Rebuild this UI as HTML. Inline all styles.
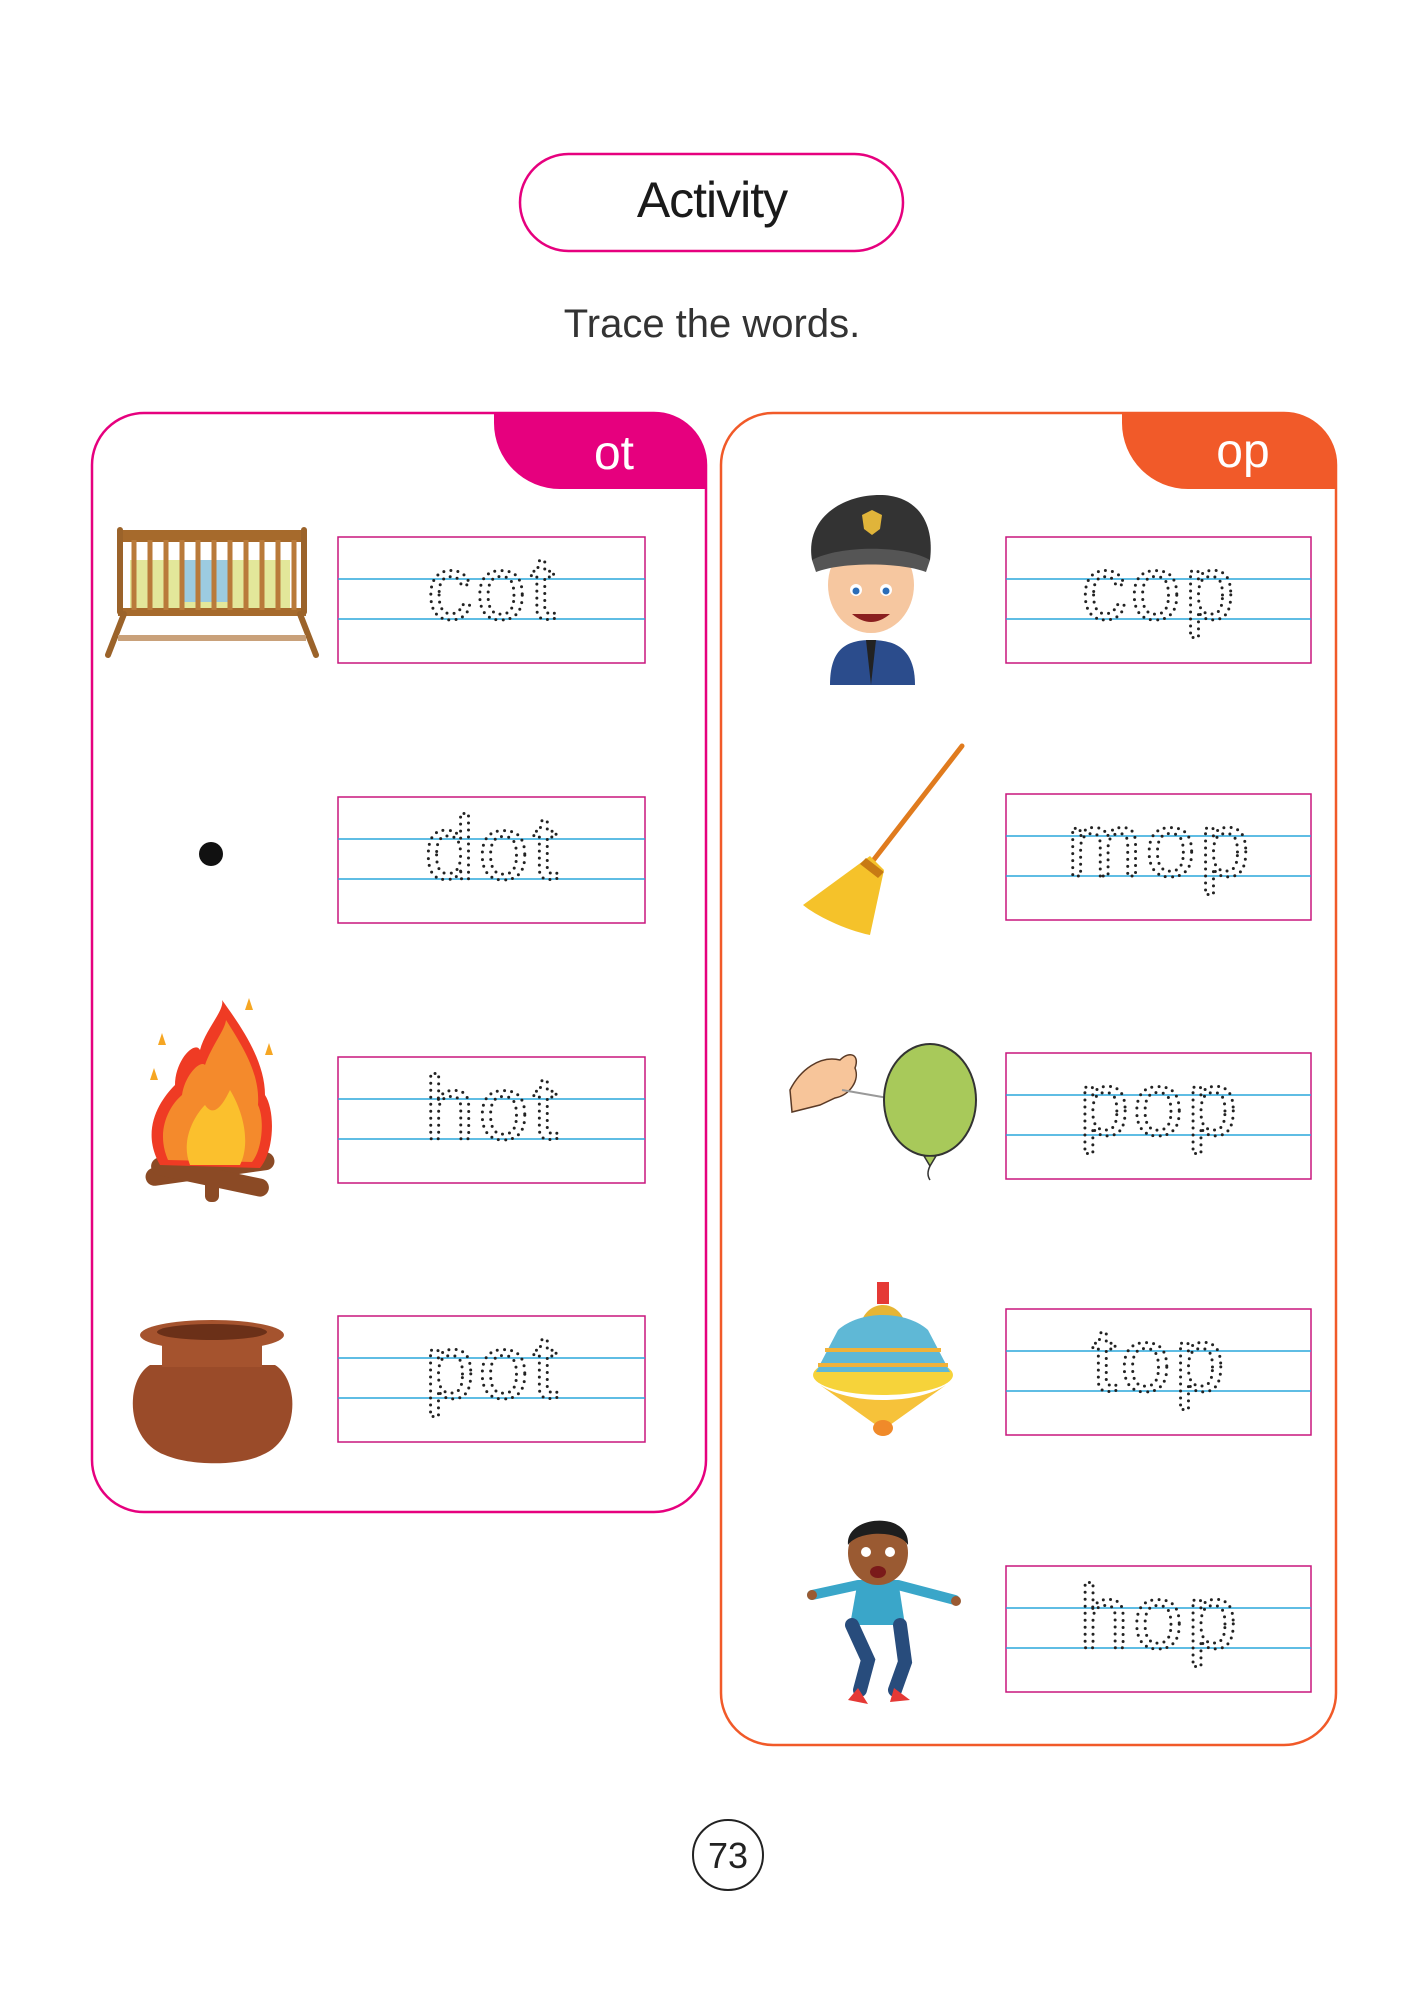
<!DOCTYPE html>
<html><head><meta charset="utf-8"><style>
html,body{margin:0;padding:0;background:#fff;}
svg{display:block;}
.t{font-family:"Liberation Sans",sans-serif;}
.tr{font-family:"Liberation Sans",sans-serif;font-size:90px;letter-spacing:4px;fill:none;stroke:#222;stroke-width:3;stroke-dasharray:0 7;stroke-linecap:round;}
</style></head><body>
<svg width="1414" height="2000" viewBox="0 0 1414 2000" xmlns="http://www.w3.org/2000/svg">
<!-- header -->
<rect x="520" y="154" width="383" height="97" rx="48.5" fill="#fff" stroke="#e6007e" stroke-width="2.5"/>
<text x="712" y="217" text-anchor="middle" class="t" font-size="50" fill="#1a1a1a" letter-spacing="-1">Activity</text>
<text x="712" y="337" text-anchor="middle" class="t" font-size="40" fill="#333">Trace the words.</text>

<!-- left panel -->
<path d="M494 413 H656 A50 50 0 0 1 706 463 V489 H560 A66 66 0 0 1 494 423 Z" fill="#e6007e"/>
<rect x="92" y="413" width="614" height="1099" rx="52" fill="none" stroke="#e6007e" stroke-width="2.5"/>
<text x="614" y="469" text-anchor="middle" class="t" font-size="48" fill="#fff">ot</text>

<!-- right panel -->
<path d="M1122 413 H1286 A50 50 0 0 1 1336 463 V489 H1188 A66 66 0 0 1 1122 423 Z" fill="#f15a29"/>
<rect x="721" y="413" width="615" height="1332" rx="52" fill="none" stroke="#f15a29" stroke-width="2.5"/>
<text x="1243" y="467" text-anchor="middle" class="t" font-size="48" fill="#fff">op</text>

<g stroke-width="1.5" fill="none">
<g transform="translate(338,537)"><rect width="307" height="126" stroke="#c8177d"/><line x1="0" y1="42" x2="307" y2="42" stroke="#2aa7dc"/><line x1="0" y1="82" x2="307" y2="82" stroke="#2aa7dc"/></g>
<g transform="translate(338,797)"><rect width="307" height="126" stroke="#c8177d"/><line x1="0" y1="42" x2="307" y2="42" stroke="#2aa7dc"/><line x1="0" y1="82" x2="307" y2="82" stroke="#2aa7dc"/></g>
<g transform="translate(338,1057)"><rect width="307" height="126" stroke="#c8177d"/><line x1="0" y1="42" x2="307" y2="42" stroke="#2aa7dc"/><line x1="0" y1="82" x2="307" y2="82" stroke="#2aa7dc"/></g>
<g transform="translate(338,1316)"><rect width="307" height="126" stroke="#c8177d"/><line x1="0" y1="42" x2="307" y2="42" stroke="#2aa7dc"/><line x1="0" y1="82" x2="307" y2="82" stroke="#2aa7dc"/></g>
<g transform="translate(1006,537)"><rect width="305" height="126" stroke="#c8177d"/><line x1="0" y1="42" x2="305" y2="42" stroke="#2aa7dc"/><line x1="0" y1="82" x2="305" y2="82" stroke="#2aa7dc"/></g>
<g transform="translate(1006,794)"><rect width="305" height="126" stroke="#c8177d"/><line x1="0" y1="42" x2="305" y2="42" stroke="#2aa7dc"/><line x1="0" y1="82" x2="305" y2="82" stroke="#2aa7dc"/></g>
<g transform="translate(1006,1053)"><rect width="305" height="126" stroke="#c8177d"/><line x1="0" y1="42" x2="305" y2="42" stroke="#2aa7dc"/><line x1="0" y1="82" x2="305" y2="82" stroke="#2aa7dc"/></g>
<g transform="translate(1006,1309)"><rect width="305" height="126" stroke="#c8177d"/><line x1="0" y1="42" x2="305" y2="42" stroke="#2aa7dc"/><line x1="0" y1="82" x2="305" y2="82" stroke="#2aa7dc"/></g>
<g transform="translate(1006,1566)"><rect width="305" height="126" stroke="#c8177d"/><line x1="0" y1="42" x2="305" y2="42" stroke="#2aa7dc"/><line x1="0" y1="82" x2="305" y2="82" stroke="#2aa7dc"/></g>
</g>

<text class="tr" x="493" y="619" text-anchor="middle">cot</text>
<text class="tr" x="493" y="879" text-anchor="middle">dot</text>
<text class="tr" x="493" y="1139" text-anchor="middle">hot</text>
<text class="tr" x="493" y="1398" text-anchor="middle">pot</text>
<text class="tr" x="1160" y="619" text-anchor="middle">cop</text>
<text class="tr" x="1160" y="876" text-anchor="middle">mop</text>
<text class="tr" x="1160" y="1135" text-anchor="middle">pop</text>
<text class="tr" x="1160" y="1391" text-anchor="middle">top</text>
<text class="tr" x="1160" y="1648" text-anchor="middle">hop</text>

<!-- crib -->
<g>
<rect x="130" y="560" width="160" height="50" fill="#e3e79a"/>
<rect x="182" y="560" width="50" height="42" fill="#9ccbe0"/>
<rect x="118" y="530" width="188" height="12" rx="4" fill="#a66a2c"/>
<rect x="118" y="608" width="188" height="8" fill="#a66a2c"/>
<g stroke="#b97a3a" stroke-width="5">
<line x1="134" y1="540" x2="134" y2="610"/><line x1="150" y1="540" x2="150" y2="610"/><line x1="166" y1="540" x2="166" y2="610"/><line x1="182" y1="540" x2="182" y2="610"/><line x1="198" y1="540" x2="198" y2="610"/><line x1="214" y1="540" x2="214" y2="610"/><line x1="230" y1="540" x2="230" y2="610"/><line x1="246" y1="540" x2="246" y2="610"/><line x1="262" y1="540" x2="262" y2="610"/><line x1="278" y1="540" x2="278" y2="610"/><line x1="294" y1="540" x2="294" y2="610"/>
</g>
<g stroke="#9b632a" stroke-width="6" stroke-linecap="round"><line x1="120" y1="530" x2="120" y2="612"/><line x1="304" y1="530" x2="304" y2="612"/><line x1="124" y1="614" x2="108" y2="655"/><line x1="300" y1="614" x2="316" y2="655"/></g>
<rect x="118" y="635" width="188" height="6" fill="#c9a17a"/>
</g>

<circle cx="211" cy="854" r="12" fill="#111"/>

<!-- fire -->
<g>
<g fill="#8b4a25"><rect x="145" y="1160" width="130" height="18" rx="9" transform="rotate(-8 210 1169)"/><rect x="150" y="1168" width="120" height="18" rx="9" transform="rotate(12 210 1177)"/><rect x="205" y="1160" width="14" height="42" rx="6"/></g>
<path d="M160 1165 C140 1130 160 1100 175 1085 C175 1060 195 1040 200 1050 C205 1030 225 1010 222 1000 C240 1025 265 1060 265 1095 C275 1110 275 1150 260 1168 Z" fill="#ef3b24"/>
<path d="M168 1160 C155 1130 170 1105 182 1095 C185 1075 200 1060 205 1065 C212 1045 225 1030 226 1020 C245 1050 260 1075 258 1105 C265 1120 262 1150 252 1162 Z" fill="#f48a2c"/>
<path d="M190 1165 C180 1140 195 1115 205 1105 C215 1120 225 1100 230 1090 C245 1115 250 1145 240 1165 Z" fill="#fbc02d"/>
<path d="M158 1045 l4 -12 l4 12 z M150 1080 l4 -12 l4 12 z M245 1010 l4 -12 l4 12z M265 1055 l4 -12 l4 12z" fill="#f6a623"/>
</g>

<!-- pot -->
<g>
<path d="M150 1365 C125 1380 125 1440 165 1455 C190 1466 240 1466 262 1455 C300 1440 300 1380 275 1365 Z" fill="#9a4b29"/>
<ellipse cx="212" cy="1335" rx="72" ry="15" fill="#a5532e"/>
<ellipse cx="212" cy="1332" rx="55" ry="8" fill="#6b3018"/>
<rect x="162" y="1345" width="100" height="22" fill="#a5532e"/>
</g>

<!-- policeman -->
<g>
<path d="M830 685 C830 650 845 640 871 640 C897 640 915 650 915 685 Z" fill="#2b4c8c"/>
<ellipse cx="871" cy="585" rx="43" ry="48" fill="#f6c7a0"/>
<path d="M812 560 C805 520 840 495 880 495 C915 495 935 520 930 560 Z" fill="#333"/>
<path d="M812 560 C840 545 905 545 930 560 L926 572 C900 562 842 562 816 572 Z" fill="#555"/>
<path d="M862 515 l10 -5 l10 5 l-2 14 l-8 6 l-8 -6z" fill="#e0b43a"/>
<circle cx="856" cy="590" r="6" fill="#fff"/><circle cx="886" cy="590" r="6" fill="#fff"/>
<circle cx="856" cy="591" r="3.5" fill="#2a6db8"/><circle cx="886" cy="591" r="3.5" fill="#2a6db8"/>
<path d="M852 614 Q871 630 890 614 Z" fill="#8a1f1f"/>
<path d="M866 640 l5 45 l5 -45z" fill="#222"/>
</g>

<!-- mop -->
<g>
<line x1="962" y1="746" x2="872" y2="862" stroke="#e07b1e" stroke-width="5" stroke-linecap="round"/>
<path d="M870 856 L884 870 L870 935 C845 930 815 915 803 905 Z" fill="#f5c22a"/>
<path d="M866 858 l18 14 l-6 6 l-18 -14z" fill="#c77a14"/>
</g>

<!-- hand + balloon -->
<g>
<path d="M790 1090 C800 1070 820 1055 840 1060 C850 1050 860 1055 855 1068 C860 1080 850 1095 835 1098 L820 1105 L792 1112 Z" fill="#f7c59a" stroke="#5a3a26" stroke-width="1.5"/>
<line x1="842" y1="1090" x2="888" y2="1098" stroke="#999" stroke-width="2"/>
<ellipse cx="930" cy="1100" rx="46" ry="56" fill="#a8c95a" stroke="#333" stroke-width="2"/>
<path d="M924 1156 l6 10 l6 -10z" fill="#a8c95a" stroke="#333" stroke-width="1.5"/>
<path d="M930 1166 q-4 8 0 14" stroke="#333" fill="none" stroke-width="1.5"/>
</g>

<!-- spinning top -->
<g>
<rect x="877" y="1282" width="12" height="22" fill="#e53935"/>
<path d="M862 1320 C870 1300 896 1300 904 1320 Z" fill="#e6b535"/>
<ellipse cx="883" cy="1375" rx="70" ry="20" fill="#f6d33a"/>
<path d="M838 1330 C860 1310 906 1310 928 1330 L950 1372 H816 Z" fill="#5fb8d6"/>
<path d="M825 1350 H941 M818 1365 H948" stroke="#f0b23a" stroke-width="4"/>
<path d="M820 1385 C850 1405 916 1405 946 1385 L890 1425 H876 Z" fill="#f6c23a"/>
<ellipse cx="883" cy="1428" rx="10" ry="8" fill="#f08a2a"/>
</g>

<!-- jumping boy -->
<g>
<path d="M858 1580 L850 1625 L905 1625 L898 1580 Z" fill="#3aa6c9"/>
<path d="M858 1585 L812 1595 M898 1585 L955 1600" stroke="#3aa6c9" stroke-width="10" stroke-linecap="round"/>
<circle cx="812" cy="1595" r="5" fill="#9a5a32"/><circle cx="956" cy="1601" r="5" fill="#9a5a32"/>
<path d="M852 1625 L868 1660 L860 1690 M900 1625 L905 1662 L895 1690" stroke="#284c7c" stroke-width="14" fill="none" stroke-linecap="round"/>
<path d="M858 1688 l-10 12 l20 4z M894 1688 l-4 14 l20 -2z" fill="#e53935"/>
<ellipse cx="878" cy="1553" rx="30" ry="32" fill="#9a5a32"/>
<path d="M848 1545 C845 1515 910 1510 908 1545 C900 1530 858 1530 848 1545 Z" fill="#1e1e1e"/>
<circle cx="866" cy="1552" r="5" fill="#fff"/><circle cx="890" cy="1552" r="5" fill="#fff"/>
<ellipse cx="878" cy="1572" rx="8" ry="6" fill="#7a1a1a"/>
</g>

<circle cx="728" cy="1855" r="35" fill="none" stroke="#222" stroke-width="2"/>
<text x="728" y="1868" text-anchor="middle" class="t" font-size="36" fill="#222">73</text>
</svg>
</body></html>
